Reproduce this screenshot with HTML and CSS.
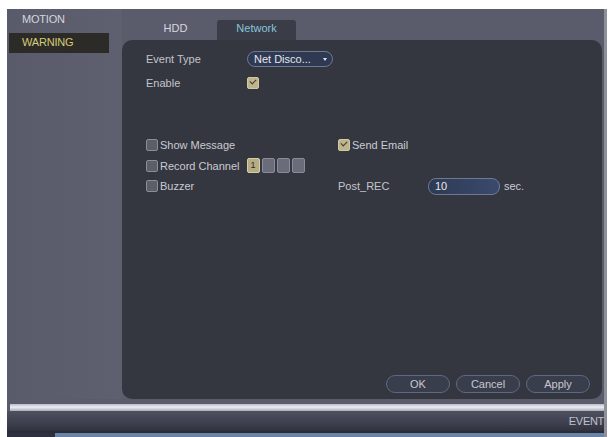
FILE: index.html
```html
<html>
<head>
  <title>Event - Warning</title>
  <link rel="stylesheet" href="styles.css">
</head>
<body>
  <div class="screen">
    <div class="main">
      <div class="sidebar">
        <div class="menuItem">MOTION</div>
        <div class="menuItem active">WARNING</div>
      </div>

      <div class="content">
        <div class="tabs">
          <div class="tab">HDD</div>
          <div class="tab current">Network</div>
        </div>

        <div class="panel">
          <div class="topGrid">
            <div class="label">Event Type</div>
            <div class="dropdown"><span>Net Disco...</span><span class="arrow"></span></div>
            <div class="label">Enable</div>
            <div><span class="check on"></span></div>
          </div>

          <div class="optGrid">
            <div class="opt"><span class="check"></span>Show Message</div>
            <div class="opt"><span class="check on"></span>Send Email</div>
            <div></div>

            <div class="opt"><span class="check"></span>Record Channel
              <span class="channels">
                <span class="chan sel">1</span><span class="chan"></span><span class="chan"></span><span class="chan"></span>
              </span>
            </div>
            <div></div>
            <div></div>

            <div class="opt"><span class="check"></span>Buzzer</div>
            <div class="label">Post_REC</div>
            <div class="opt"><span class="field">10</span>sec.</div>
          </div>

          <div class="buttons">
            <div class="btn">OK</div>
            <div class="btn">Cancel</div>
            <div class="btn">Apply</div>
          </div>
        </div>
      </div>
    </div>

    <div class="bar"></div>
    <div class="status">EVENT</div>
    <div class="bottomLine"><div class="bottomDark"></div></div>
  </div>
</body>
</html>
```

FILE: styles.css
```css
body{
    margin:0;
    background:#fff;
    font-family:"Liberation Sans", Arial, sans-serif;
    font-size:11px;
    color:#c9cbd2;
}

.screen{
    margin-left:7px;
    margin-top:9px;
    width:600px;
    height:428px;
    background:#5a5c6b;
    border-right:3px solid #8d8f9b;
    box-sizing:border-box;
    display:flex;
    flex-direction:column;
}

.main{
    display:flex;
    height:390px;
    flex-shrink:0;
}

/* left menu */
.sidebar{
    width:115px;
    flex-shrink:0;
    padding-top:1px;
    background:linear-gradient(90deg, #595b6a 0, #5e6070 100%);
}
.menuItem{
    height:20px;
    line-height:18px;
    padding-left:13px;
    margin:0 13px 3px 2px;
    color:#d4d6de;
    letter-spacing:-0.2px;
}
.menuItem.active{
    background:#2c2b27;
    color:#d8cc78;
}

/* tabs + panel */
.content{
    flex:1;
    display:flex;
    flex-direction:column;
    padding-right:2px;
}
.tabs{
    display:flex;
    gap:2px;
    margin-top:11px;
    padding-left:14px;
}
.tab{
    width:79px;
    height:20px;
    line-height:17px;
    text-align:center;
    color:#d6d8e0;
}
.tab.current{
    background:#3a3c47;
    border-radius:3px 3px 0 0;
    color:#86c6dc;
}

.panel{
    flex:1;
    background:#353740;
    border-radius:10px;
    padding:7px 12px 6px 24px;
    display:flex;
    flex-direction:column;
}

.label{
    color:#c3c5cd;
}

.topGrid{
    display:grid;
    grid-template-columns:101px 1fr;
    grid-auto-rows:24px;
    align-items:center;
}

.dropdown{
    width:86px;
    height:16px;
    border:1px solid #6c7894;
    border-radius:8px;
    background:#2f3a52;
    display:flex;
    align-items:center;
    justify-content:space-between;
    padding:0 5px 0 6px;
    box-sizing:border-box;
    color:#e4e6ee;
}
.arrow{
    width:0;
    height:0;
    border-left:2px solid transparent;
    border-right:2px solid transparent;
    border-top:3px solid #e0e2ea;
}

.optGrid{
    margin-top:40px;
    display:grid;
    grid-template-columns:192px 90px 1fr;
    grid-auto-rows:20.5px;
    align-items:center;
}
.opt{
    display:flex;
    align-items:center;
}

.check{
    display:inline-block;
    width:10px;
    height:10px;
    border:1px solid #8a8c98;
    border-radius:2px;
    background:#5c5e6a;
    margin-right:2px;
    position:relative;
}
.check.on{
    background:#bfb58d;
    border-color:#d0c8a0;
}
.check.on:after{
    content:"";
    position:absolute;
    left:2px;
    top:1px;
    width:5px;
    height:3px;
    border-left:1.5px solid #3a3a30;
    border-bottom:1.5px solid #3a3a30;
    transform:rotate(-45deg);
}

.channels{
    display:inline-flex;
    gap:2px;
    margin-left:7px;
}
.chan{
    width:11px;
    height:13px;
    border:1px solid #8a8c9a;
    border-radius:2px;
    background:#6a6c7a;
    font-size:9px;
    line-height:13px;
    text-align:center;
    color:#2a2a22;
}
.chan.sel{
    background:#b4ad84;
    border-color:#d8d0a0;
}

.field{
    width:64px;
    height:15px;
    border:1px solid #6c7894;
    border-radius:8px;
    background:linear-gradient(90deg, #2f3a52 0, #3a4a6e 100%);
    line-height:15px;
    padding-left:6px;
    margin-right:4px;
    color:#e6e8f0;
}

.buttons{
    margin-top:auto;
    display:flex;
    justify-content:flex-end;
    gap:6px;
}
.btn{
    width:62px;
    height:16px;
    line-height:16px;
    text-align:center;
    border:1px solid #5d6884;
    border-radius:9px;
    background:#3a3e4c;
    color:#c7c9d1;
}

/* bottom bars */
.bar{
    height:7px;
    margin:5px 0 0 3px;
    flex-shrink:0;
    background:linear-gradient(#b8bac6 0, #eceef4 45%, #a8aab8 100%);
}
.status{
    height:20px;
    flex-shrink:0;
    line-height:20px;
    text-align:right;
    background:linear-gradient(#4e5060 0, #3e4050 60%, #30323e 100%);
    color:#c0c2cc;
    letter-spacing:-0.3px;
}
.bottomLine{
    flex:1;
    background:#6a84a6;
    border-top:2px solid #2a2c38;
}
.bottomDark{
    width:48px;
    height:100%;
    background:#2e3040;
}
```
